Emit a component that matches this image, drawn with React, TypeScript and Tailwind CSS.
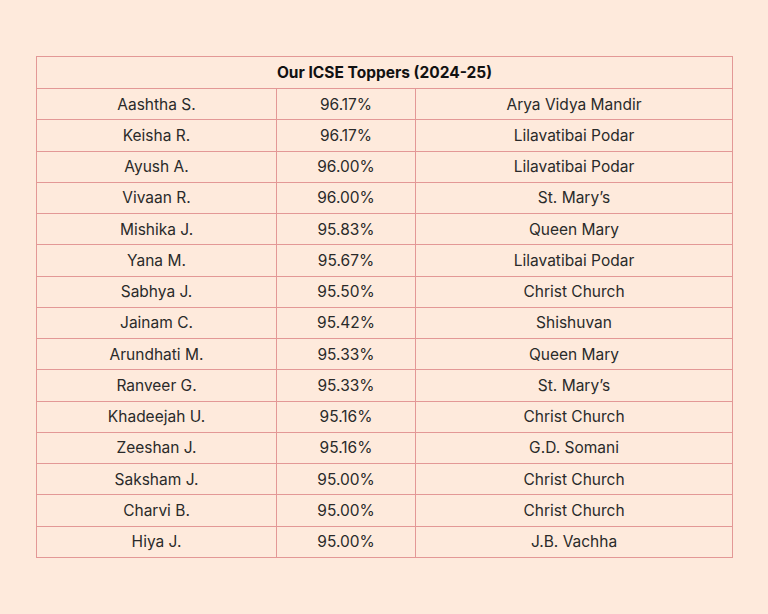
const rows = [
  ["Aashtha S.", "96.17%", "Arya Vidya Mandir"],
  ["Keisha R.", "96.17%", "Lilavatibai Podar"],
  ["Ayush A.", "96.00%", "Lilavatibai Podar"],
  ["Vivaan R.", "96.00%", "St. Mary’s"],
  ["Mishika J.", "95.83%", "Queen Mary"],
  ["Yana M.", "95.67%", "Lilavatibai Podar"],
  ["Sabhya J.", "95.50%", "Christ Church"],
  ["Jainam C.", "95.42%", "Shishuvan"],
  ["Arundhati M.", "95.33%", "Queen Mary"],
  ["Ranveer G.", "95.33%", "St. Mary’s"],
  ["Khadeejah U.", "95.16%", "Christ Church"],
  ["Zeeshan J.", "95.16%", "G.D. Somani"],
  ["Saksham J.", "95.00%", "Christ Church"],
  ["Charvi B.", "95.00%", "Christ Church"],
  ["Hiya J.", "95.00%", "J.B. Vachha"],
];

const App = () => {
  return (
    <div
      className="w-[768px] h-[614px] bg-[#feeadc] pt-[56px] pl-[36px]"
      style={{ fontFamily: "Inter, 'Open Sans', sans-serif" }}
    >
      <table className="w-[696px] border-collapse text-[15.5px] text-[#2a2a2a] table-fixed">
        <colgroup>
          <col className="w-[240px]" />
          <col className="w-[139px]" />
          <col className="w-[317px]" />
        </colgroup>
        <thead>
          <tr className="h-[32px]">
            <th
              colSpan={3}
              className="border border-[#e39896] font-bold text-[#111] text-center p-0"
            >
              Our ICSE Toppers (2024-25)
            </th>
          </tr>
        </thead>
        <tbody>
          {rows.map((r) => (
            <tr key={r[0]} className="h-[31.27px]">
              {r.map((c, i) => (
                <td key={i} className="border border-[#e39896] text-center p-0">
                  {c}
                </td>
              ))}
            </tr>
          ))}
        </tbody>
      </table>
    </div>
  );
};

export default App;
